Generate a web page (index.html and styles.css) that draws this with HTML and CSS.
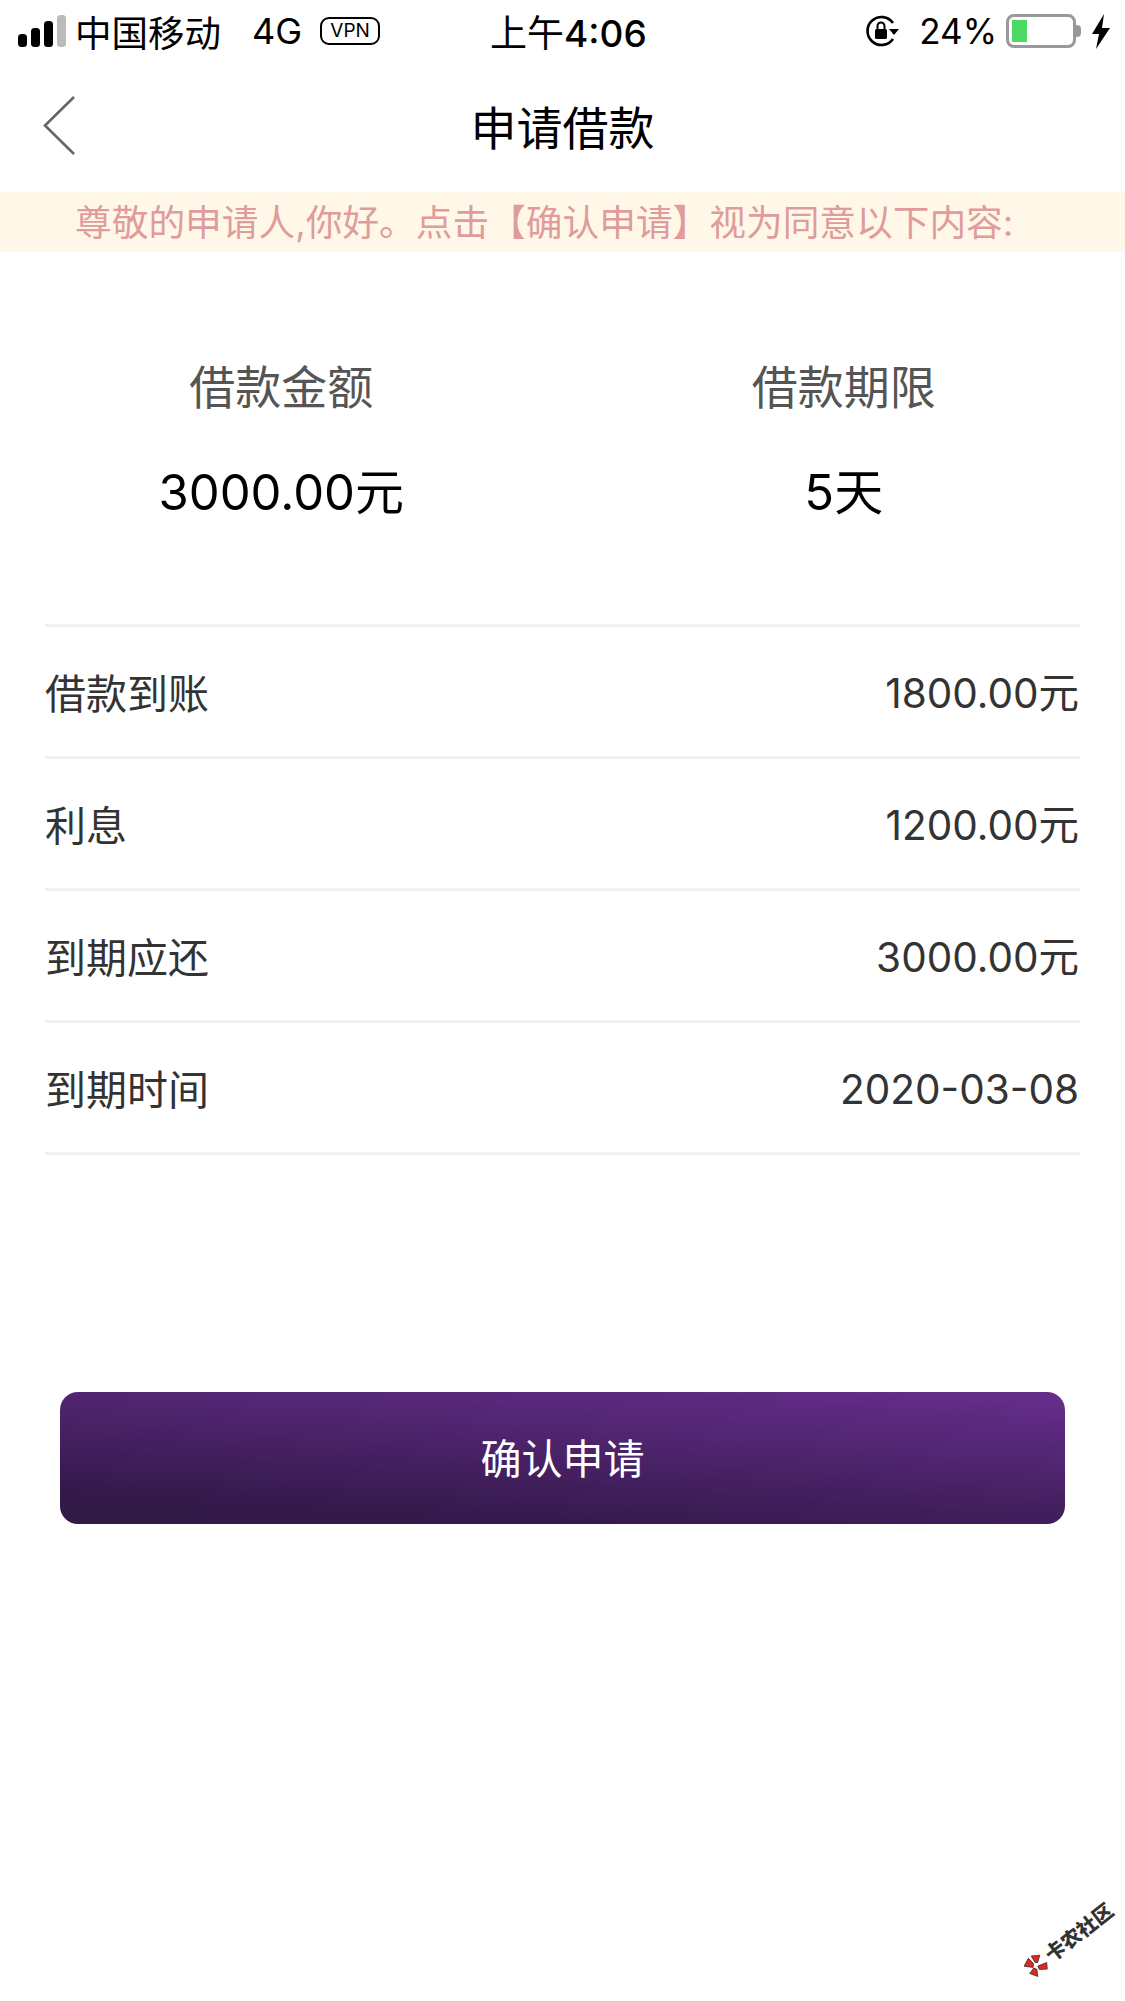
FILE: index.html
```html
<!DOCTYPE html>
<html lang="zh-CN">
<head>
  <meta charset="UTF-8">
  <title>申请借款</title>
  <link rel="stylesheet" href="styles.css">
</head>
<body>
  <div class="page">
    <!-- status bar -->
    <div class="status">
      <div class="status-left">
        <svg class="signal" width="48" height="32" viewBox="0 0 48 32">
          <rect x="0" y="19" width="9" height="13" rx="3.500" fill="#000"/>
          <rect x="13" y="13" width="9" height="19" rx="3.500" fill="#000"/>
          <rect x="26" y="6" width="9" height="26" rx="3.500" fill="#000"/>
          <rect x="39" y="0" width="9" height="32" rx="3.500" fill="#bbb"/>
        </svg>
        <span class="carrier">中国移动</span>
        <span class="net">4G</span>
        <span class="vpn">VPN</span>
      </div>
      <div class="status-time">上午<b>4:06</b></div>
      <div class="status-right">
        <svg class="lock" width="34" height="32" viewBox="0 0 34 32">
          <path d="M27 24A14 14 0 1 1 27 8" fill="none" stroke="#000" stroke-width="2.600"/>
          <path d="M23 14h10l-5 6z" fill="#000"/>
          <rect x="9" y="14" width="12" height="10" rx="1.500" fill="#000"/>
          <path d="M11.500 14v-3a3.500 3.500 0 0 1 7 0v3" fill="none" stroke="#000" stroke-width="2"/>
        </svg>
        <span class="pct">24%</span>
        <div class="battery"><div class="battery-fill"></div></div>
        <div class="battery-tip"></div>
        <svg class="bolt" width="18" height="35" viewBox="0 0 18 35">
          <path d="M12 0L0 20h7L4 35 18 14H10z" fill="#000"/>
        </svg>
      </div>
    </div>

    <!-- nav -->
    <div class="nav">
      <svg class="back" width="34" height="60" viewBox="0 0 34 60">
        <path d="M32 1L3 29.500l29 28.500" fill="none" stroke="#666" stroke-width="2.600"/>
      </svg>
      <h1 class="title">申请借款</h1>
    </div>

    <div class="notice">尊敬的申请人,你好。点击【确认申请】视为同意以下内容:</div>

    <div class="summary">
      <div class="summary-item">
        <div class="summary-label">借款金额</div>
        <div class="summary-value">3000.00元</div>
      </div>
      <div class="summary-item">
        <div class="summary-label">借款期限</div>
        <div class="summary-value">5天</div>
      </div>
    </div>

    <ul class="rows">
      <li class="row"><span class="row-label">借款到账</span><span>1800.00元</span></li>
      <li class="row"><span class="row-label">利息</span><span>1200.00元</span></li>
      <li class="row"><span class="row-label">到期应还</span><span>3000.00元</span></li>
      <li class="row"><span class="row-label">到期时间</span><span>2020-03-08</span></li>
    </ul>

    <button class="confirm">确认申请</button>

    <!-- forum watermark -->
    <div class="watermark">
      <svg width="22" height="22" viewBox="0 0 24 24">
        <path d="M1 5L10 1l1 8-3 3zM14 1l8 5-7 5-2-2zM1 15l7-2 2 3-4 7zM13 14l10 3-4 6-7-5z" fill="#e5261f" stroke="#333" stroke-width=".8"/>
      </svg>
      <span>卡农社区</span>
    </div>
  </div>
</body>
</html>
```

FILE: styles.css
```css
* {
  box-sizing: border-box;
}
body {
  margin: 0;
  background: #fff;
  font-family: Inter, "Noto Sans CJK SC", sans-serif;
  color: #000;
}
.page {
  position: relative;
  width: 1125px;
  height: 2001px;
  overflow: hidden;
}

.status {
  display: flex;
  justify-content: space-between;
  align-items: center;
  height: 62px;
  padding: 0 15px 0 18px;
  font-size: 35px;
  position: relative;
}
.status-left,
.status-right {
  display: flex;
  align-items: center;
}
.carrier {
  margin-left: 9px;
  font-size: 36.500px;
}
.net {
  margin-left: 31px;
  font-size: 36px;
}
.vpn {
  margin-left: 18px;
  width: 60px;
  height: 28px;
  border: 2.500px solid #000;
  border-radius: 9px;
  font-size: 19px;
  line-height: 23px;
  text-align: center;
}
.status-time {
  position: absolute;
  left: 490px;
  font-size: 37px;
}
.status-time b {
  font-weight: 500;
}
.lock {
  margin-right: 19px;
}
.pct {
  margin-right: 9px;
}
.battery {
  width: 70px;
  height: 34px;
  border: 3px solid #999;
  border-radius: 8px;
  padding: 3px;
}
.battery-fill {
  width: 15px;
  height: 100%;
  background: #4cd964;
}
.battery-tip {
  width: 5px;
  height: 12px;
  background: #999;
  border-radius: 0 4px 4px 0;
  margin-right: 11px;
}

.nav {
  position: relative;
  display: flex;
  align-items: center;
  justify-content: center;
  height: 130px;
  padding-bottom: 4px;
}
.back {
  position: absolute;
  left: 42px;
  top: 34px;
}
.title {
  margin: 0;
  font-size: 46px;
  font-weight: 400;
}

.notice {
  height: 60px;
  line-height: 62px;
  padding-left: 75px;
  background: #fff8e8;
  color: #e09c9c;
  font-size: 36.700px;
  white-space: nowrap;
}

.summary {
  display: grid;
  grid-template-columns: 1fr 1fr;
  padding-top: 100px;
  height: 372px;
  text-align: center;
}
.summary-label {
  font-size: 46px;
  line-height: 70px;
  color: #555;
}
.summary-value {
  margin-top: 36px;
  font-size: 49px;
  line-height: 70px;
}

.rows {
  list-style: none;
  margin: 0 45px;
  padding: 0;
  border-top: 3px solid #f0f0f5;
}
.row {
  display: flex;
  justify-content: space-between;
  align-items: center;
  height: 132px;
  padding: 5px 1px 0 0;
  border-bottom: 3px solid #f0f0f5;
  font-size: 40.500px;
  line-height: 60px;
  color: #333;
}
.row-label {
  font-size: 41px;
}

.confirm {
  display: block;
  width: 1005px;
  height: 132px;
  margin: 237px 0 0 60px;
  padding-bottom: 5px;
  border: 0;
  border-radius: 18px;
  background: linear-gradient(184deg, #672e8d 0%, #33194a 85%, #311943 100%);
  color: #fff;
  font-family: inherit;
  font-size: 41px;
}

.watermark {
  position: absolute;
  left: 1027px;
  top: 1957px;
  display: flex;
  align-items: center;
  gap: 3px;
  transform: rotate(-38deg);
  transform-origin: left center;
  font-size: 20px;
  font-weight: 900;
  color: #333;
  white-space: nowrap;
}
```
